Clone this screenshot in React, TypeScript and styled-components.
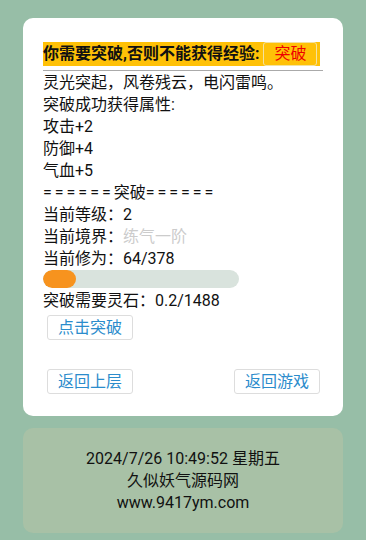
import styled, { createGlobalStyle } from "styled-components";

const GlobalStyle = createGlobalStyle`
  html, body {
    margin: 0;
    padding: 0;
    background: #97bea7;
  }
  body {
    font-family: Roboto, "Noto Sans CJK SC", sans-serif;
    font-size: 16px;
    color: #111;
  }
`;

const Page = styled.div`
  padding: 18px 23px 9px;
  display: flex;
  flex-direction: column;
  gap: 12px;
`;

const Card = styled.div`
  background: #fff;
  border-radius: 10px;
  padding: 24px 20px 22px;
`;

const Header = styled.div`
  border-bottom: 1px solid #aaa;
  padding-bottom: 4px;
  line-height: 22px;
`;

const HeaderBar = styled.div`
  display: inline-flex;
  align-items: center;
  background: #ffc107;
  font-weight: bold;
  font-size: 16px;
  height: 24px;
  padding-right: 3px;
  gap: 4px;
`;

const RedTag = styled.span`
  border: 1px solid #f3e2a0;
  border-radius: 3px;
  color: #e00;
  font-weight: normal;
  font-size: 16px;
  padding: 0 10px;
  line-height: 22px;
`;

const Line = styled.div<{ $muted?: boolean }>`
  line-height: 22px;
  color: #111;
  padding-top: 1px;
  margin-bottom: -1px;
  span {
    color: ${(p) => (p.$muted ? "#ccc" : "inherit")};
  }
`;

const Equals = styled.span`
  letter-spacing: 3px;
`;

const Track = styled.div`
  width: 196px;
  height: 18px;
  border-radius: 9px;
  background: #d9e3dd;
  margin: 1px 0 1px;
  overflow: hidden;
`;

const Fill = styled.div`
  height: 100%;
  border-radius: 9px;
  background: #f7931e;
`;

const Button = styled.button`
  font-family: inherit;
  font-size: 16px;
  color: #2b8ccc;
  background: #fff;
  border: 1px solid #ddd;
  border-radius: 3px;
  padding: 0 10px;
  height: 25px;
  line-height: 23px;
  cursor: pointer;
`;

const ButtonRow = styled.div<{ $top?: number }>`
  display: flex;
  justify-content: space-between;
  padding: 0 3px 0 4px;
  margin-top: ${(p) => p.$top ?? 0}px;
`;

const Footer = styled.div`
  background: #a8c1a6;
  border-radius: 10px;
  padding: 20px 0 19px;
  text-align: center;
  line-height: 22px;
  color: #111;
`;

export default function App() {
  const cur = 64;
  const max = 378;
  return (
    <>
      <GlobalStyle />
      <Page>
        <Card>
          <Header>
            <HeaderBar>
              你需要突破,否则不能获得经验:
              <RedTag>突破</RedTag>
            </HeaderBar>
          </Header>
          <Line>灵光突起，风卷残云，电闪雷鸣。</Line>
          <Line>突破成功获得属性:</Line>
          <Line>攻击+2</Line>
          <Line>防御+4</Line>
          <Line>气血+5</Line>
          <Line>
            <Equals>======</Equals>突破<Equals>======</Equals>
          </Line>
          <Line>当前等级：2</Line>
          <Line $muted>
            当前境界：<span>练气一阶</span>
          </Line>
          <Line>
            当前修为：{cur}/{max}
          </Line>
          <Track>
            <Fill style={{ width: `${Math.max((cur / max) * 100, 17)}%` }} />
          </Track>
          <Line>突破需要灵石：0.2/1488</Line>
          <ButtonRow $top={4}>
            <Button>点击突破</Button>
          </ButtonRow>
          <ButtonRow $top={29}>
            <Button>返回上层</Button>
            <Button>返回游戏</Button>
          </ButtonRow>
        </Card>
        <Footer>
          <div>2024/7/26 10:49:52 星期五</div>
          <div>久似妖气源码网</div>
          <div>www.9417ym.com</div>
        </Footer>
      </Page>
    </>
  );
}
